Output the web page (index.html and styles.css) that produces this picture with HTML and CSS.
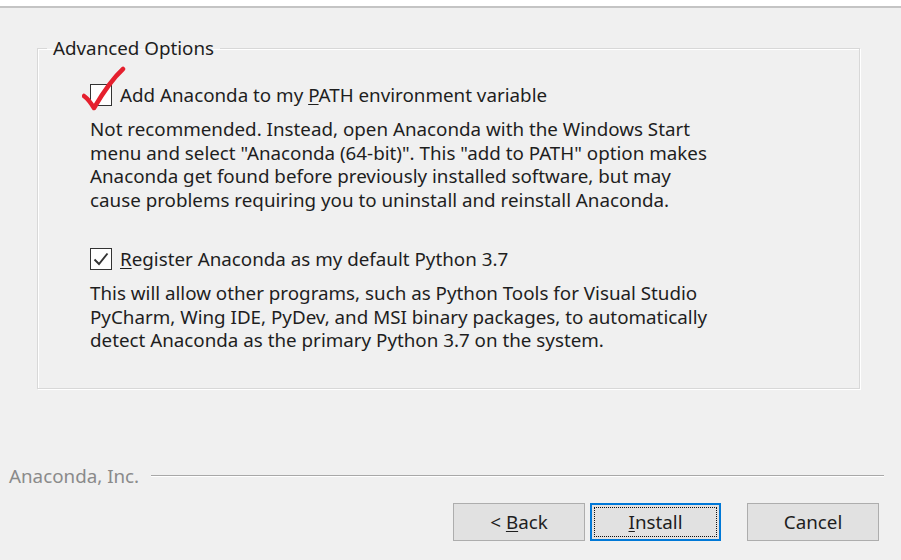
FILE: index.html
```html
<!DOCTYPE html>
<html lang="en">
  <head>
    <meta charset="utf-8" />
    <title>Anaconda3 Setup</title>
    <link rel="stylesheet" href="styles.css">
  </head>
  <body>
    <div class="header-edge"></div>

    <div class="page">
      <fieldset class="options">
        <legend>Advanced Options</legend>

        <div class="options__body">
          <div class="option">
            <label class="option__label">
              <span class="box"></span>
              <span>Add Anaconda to my <u>P</u>ATH environment variable</span>
            </label>
            <!-- hand-drawn tick over the first box -->
            <svg class="scribble" width="46" height="46" viewBox="0 0 46 46">
              <path d="M2 30 C6 33 9 37 12 42 C19 30 29 14 41 3" fill="none" stroke="#e5202e" stroke-width="4.5" stroke-linecap="round" stroke-linejoin="round" />
            </svg>
            <p class="option__text">
              Not recommended. Instead, open Anaconda with the Windows Start<br>
              menu and select "Anaconda (64-bit)". This "add to PATH" option makes<br>
              Anaconda get found before previously installed software, but may<br>
              cause problems requiring you to uninstall and reinstall Anaconda.
            </p>
          </div>

          <div class="option">
            <label class="option__label">
              <span class="box">
                <svg width="16" height="14" viewBox="0 0 16 14">
                  <path d="M1.5 7.5 L6 12 L14.5 1.5" fill="none" stroke="#333" stroke-width="1.9" />
                </svg>
              </span>
              <span><u>R</u>egister Anaconda as my default Python 3.7</span>
            </label>
            <p class="option__text">
              This will allow other programs, such as Python Tools for Visual Studio<br>
              PyCharm, Wing IDE, PyDev, and MSI binary packages, to automatically<br>
              detect Anaconda as the primary Python 3.7 on the system.
            </p>
          </div>
        </div>
      </fieldset>
    </div>

    <div class="brand">
      <span class="brand__name">Anaconda, Inc.</span>
      <span class="brand__rule"></span>
    </div>

    <div class="actions">
      <button class="btn">&lt; <u>B</u>ack</button>
      <button class="btn btn--default"><span class="focus"><u>I</u>nstall</span></button>
      <button class="btn btn--cancel">Cancel</button>
    </div>
  </body>
</html>
```

FILE: styles.css
```css
html,
body {
  margin: 0;
  height: 100%;
}
body {
  background-color: #f0f0f0;
  color: #1e1e1e;
  font-family: "Noto Sans", "Open Sans", sans-serif;
  font-size: 18.8px;
  overflow: hidden;
}

.header-edge {
  height: 6px;
  background-color: #fff;
  border-bottom: 2px solid #c4c4c4;
}

.page {
  padding: 27px 41px 0 37px;
}

.options {
  margin: 0;
  padding: 0;
  box-sizing: border-box;
  height: 354px;
  border: 1px solid #d8d8d8;
  box-shadow: inset 1px 1px 0 #fff, 1px 1px 0 #fff;
}
.options legend {
  margin-left: 9px;
  padding: 0 6px;
}
.options__body {
  padding: 21px 0 0 52px;
}

.option {
  position: relative;
  margin-bottom: 33px;
}
.option__label {
  display: flex;
  align-items: center;
  gap: 8px;
  height: 26px;
}
.option__label u {
  text-decoration-thickness: 1px;
  text-underline-offset: 2px;
}
.option__text {
  margin: 10px 0 0;
  line-height: 23.7px;
}

.box {
  width: 22px;
  height: 22px;
  box-sizing: border-box;
  border: 1px solid #333;
  background-color: #fff;
  display: flex;
  align-items: center;
  justify-content: center;
}

.scribble {
  position: absolute;
  left: -8px;
  top: -16px;
}

.brand {
  display: flex;
  align-items: center;
  gap: 12px;
  margin: 74px 17px 0 9px;
  color: #8a8a8a;
}
.brand__rule {
  flex: 1;
  border-top: 1px solid #a8a8a8;
  border-bottom: 1px solid #fff;
}

.actions {
  display: flex;
  justify-content: flex-end;
  margin: 14px 22px 0 0;
}
.btn {
  width: 132px;
  height: 38px;
  padding: 0;
  font: inherit;
  color: #1e1e1e;
  background-color: #e1e1e1;
  border: 1px solid #adadad;
}
.btn u {
  text-underline-offset: 2px;
}
.btn + .btn {
  margin-left: 5px;
}
.btn--default {
  width: 131px;
  border: 2px solid #0078d7;
  padding: 2px;
}
.btn--default .focus {
  display: flex;
  align-items: center;
  justify-content: center;
  height: 100%;
  border: 1px dotted #111;
  box-sizing: border-box;
}
.btn--cancel {
  margin-left: 26px !important;
}
```
